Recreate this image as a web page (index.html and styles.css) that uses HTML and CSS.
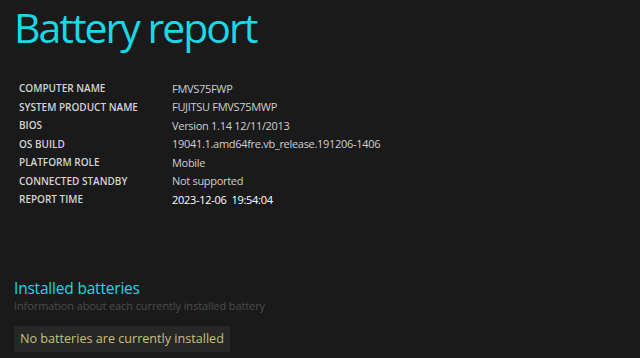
FILE: index.html
```html
<!DOCTYPE html>
<html>
  <head>
    <meta charset="UTF-8" />
    <title>Battery report</title>
    <link rel="stylesheet" href="styles.css">
  </head>
  <body>
    <h1 class="title">Battery report</h1>
    <table class="info">
      <tr><td class="label">COMPUTER NAME</td><td>FMVS75FWP</td></tr>
      <tr><td class="label">SYSTEM PRODUCT NAME</td><td>FUJITSU FMVS75MWP</td></tr>
      <tr><td class="label">BIOS</td><td>Version 1.14 12/11/2013</td></tr>
      <tr><td class="label">OS BUILD</td><td>19041.1.amd64fre.vb_release.191206-1406</td></tr>
      <tr><td class="label">PLATFORM ROLE</td><td>Mobile</td></tr>
      <tr><td class="label">CONNECTED STANDBY</td><td>Not supported</td></tr>
      <tr><td class="label">REPORT TIME</td><td class="time">2023-12-06&nbsp;&nbsp;19:54:04</td></tr>
    </table>
    <h2 class="section">Installed batteries</h2>
    <div class="desc">Information about each currently installed battery</div>
    <div class="notice">No batteries are currently installed</div>
  </body>
</html>
```
FILE: styles.css
```css
body {
  margin: 0;
  padding: 0 14px;
  background: #1a1a1a;
  color: #d8d8d8;
  font-family: 'Open Sans', 'Noto Sans', sans-serif;
}
.title {
  margin: 0;
  font-size: 41px;
  font-weight: 400;
  letter-spacing: -2px;
  line-height: 54px;
  color: #1ad8e6;
}
.info {
  margin-top: 25px;
  border-collapse: collapse;
  margin-left: 1px;
}
.info td {
  padding: 0 4px;
  height: 18.5px;
  font-size: 11px;
  letter-spacing: -0.3px;
  color: #cfcfcf;
  white-space: nowrap;
}
.info .label {
  width: 145px;
  font-size: 10px;
  font-weight: 600;
  letter-spacing: 0;
  color: #d4d4d4;
}
.info .time {
  color: #fff;
}
.section {
  margin: 69px 0 0;
  font-size: 15.5px;
  font-weight: 400;
  letter-spacing: -0.2px;
  color: #1ad8e6;
  line-height: 20px;
}
.desc {
  font-size: 11px;
  letter-spacing: -0.1px;
  color: #4c4c4c;
  line-height: 16px;
}
.notice {
  display: inline-block;
  margin-top: 12px;
  padding: 3px 6px 4px;
  background: #272727;
  color: #c9c17a;
  font-size: 12.6px;
  line-height: 19px;
}
```
